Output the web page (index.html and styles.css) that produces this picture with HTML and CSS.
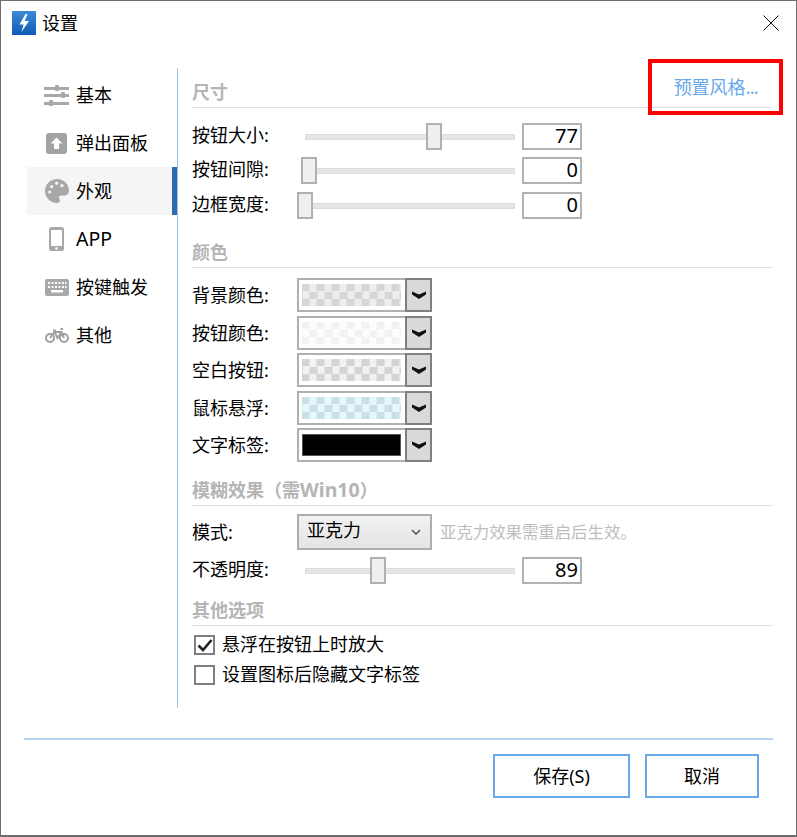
FILE: index.html
```html
<!DOCTYPE html>
<html lang="zh-CN">
<head>
<meta charset="utf-8">
<title>设置</title>
<link rel="stylesheet" href="styles.css">
</head>
<body>
<div class="window">
  <header class="titlebar">
    <svg class="logo" viewBox="0 0 24 24" width="24" height="24">
      <defs><linearGradient id="lg" x1="0" y1="0" x2="0" y2="1"><stop offset="0" stop-color="#3f8ad8"/><stop offset="1" stop-color="#0b5cb8"/></linearGradient></defs>
      <rect width="24" height="24" fill="url(#lg)"/>
      <path d="M13.5 3 7.5 13.5h4L9.5 21l7.5-11h-4.2L15.5 3z" fill="#fff"/>
    </svg>
    <span class="title">设置</span>
    <svg class="close" viewBox="0 0 16 16" width="16" height="16"><path d="M.5.5l15 15M15.5.5l-15 15" stroke="#111" stroke-width="1" fill="none"/></svg>
  </header>

  <div class="main">
    <nav class="sidebar">
      <div class="nav-item">
        <span class="nav-icon"><svg viewBox="0 0 25 21" width="25" height="21" fill="#a8a8a8"><rect y="2" width="25" height="3"/><rect y="9" width="25" height="3"/><rect y="17" width="25" height="3"/><rect x="11" y="0" width="4" height="6" rx="1"/><rect x="17" y="7" width="4" height="6" rx="1"/><rect x="5" y="15" width="4" height="6" rx="1"/></svg></span>
        <span>基本</span>
      </div>
      <div class="nav-item">
        <span class="nav-icon"><svg viewBox="0 0 21 21" width="21" height="21"><rect width="21" height="21" rx="3" fill="#a3a3a3"/><path d="M10.5 4.5 16.5 10.5H13V16H8V10.5H4.5z" fill="#fff"/></svg></span>
        <span>弹出面板</span>
      </div>
      <div class="nav-item active">
        <span class="nav-icon"><svg viewBox="0 0 24 24" width="24" height="24"><path d="M12 0C5.4 0 0 5.4 0 12s5.4 12 12 12c2 0 3-1.2 3-2.7 0-.8-.4-1.3-.7-1.8-.3-.5-.5-1-.2-1.7.5-1 1.6-1.2 3-1.2h2.4C22 16.6 24 15 24 11.5 24 5 18.6 0 12 0z" fill="#a8a8a8"/><circle cx="4.7" cy="13" r="1.6" fill="#f5f5f5"/><circle cx="6.7" cy="7.7" r="1.6" fill="#f5f5f5"/><circle cx="11.7" cy="4.2" r="1.6" fill="#f5f5f5"/><circle cx="17" cy="6.7" r="1.6" fill="#f5f5f5"/></svg></span>
        <span>外观</span>
      </div>
      <div class="nav-item">
        <span class="nav-icon"><svg viewBox="0 0 15 24" width="15" height="24"><rect width="15" height="24" rx="2.5" fill="#a8a8a8"/><rect x="2" y="3" width="11" height="16" fill="#fff"/><circle cx="7.5" cy="21.5" r="1.3" fill="#fff"/></svg></span>
        <span class="latin">APP</span>
      </div>
      <div class="nav-item">
        <span class="nav-icon"><svg viewBox="0 0 24 17" width="24" height="17"><rect width="24" height="17" rx="2" fill="#a8a8a8"/><g fill="#fff"><rect x="3" y="3" width="2" height="2"/><rect x="6.5" y="3" width="2" height="2"/><rect x="10" y="3" width="2" height="2"/><rect x="13.5" y="3" width="2" height="2"/><rect x="17" y="3" width="2" height="2"/><rect x="20" y="3" width="1.5" height="2"/><rect x="3" y="7" width="2" height="2"/><rect x="6.5" y="7" width="2" height="2"/><rect x="10" y="7" width="2" height="2"/><rect x="13.5" y="7" width="2" height="2"/><rect x="17" y="7" width="2" height="2"/><rect x="20" y="7" width="1.5" height="2"/><rect x="6" y="11" width="12" height="2.5"/></g></svg></span>
        <span>按键触发</span>
      </div>
      <div class="nav-item">
        <span class="nav-icon"><svg viewBox="0 0 24 15" width="24" height="15" fill="none" stroke="#a0a0a0" stroke-width="2"><circle cx="5" cy="10" r="4"/><circle cx="19" cy="10" r="4"/><path d="M5 10 9.5 4h7L19 10M9.5 4 12.5 10 16.5 4M15.5 1h2.5M8 2.5h3"/></svg></span>
        <span>其他</span>
      </div>
    </nav>

    <div class="content">
      <div class="heading">
        <span>尺寸</span>
        <a class="preset">预置风格<span class="dots">...</span></a>
      </div>
      <div class="rows rows-size">
        <div class="row slider-row"><span class="label">按钮大小:</span><div class="slider"><i class="track"></i><i class="thumb" style="left:129px"></i></div><div class="num">77</div></div>
        <div class="row slider-row"><span class="label">按钮间隙:</span><div class="slider"><i class="track"></i><i class="thumb" style="left:4px"></i></div><div class="num">0</div></div>
        <div class="row slider-row"><span class="label">边框宽度:</span><div class="slider"><i class="track"></i><i class="thumb" style="left:0"></i></div><div class="num">0</div></div>
      </div>

      <div class="heading heading-color"><span>颜色</span></div>
      <div class="rows rows-color">
        <div class="row color-row"><span class="label">背景颜色:</span><div class="picker"><div class="well"><div class="swatch sw-bg"></div></div><div class="drop"><svg viewBox="0 0 14 8" width="14" height="8"><path d="M0 .5 7 3.5 14 .5V3.5L7 8 0 3.5z" fill="#111"/></svg></div></div></div>
        <div class="row color-row"><span class="label">按钮颜色:</span><div class="picker"><div class="well"><div class="swatch sw-btn"></div></div><div class="drop"><svg viewBox="0 0 14 8" width="14" height="8"><path d="M0 .5 7 3.5 14 .5V3.5L7 8 0 3.5z" fill="#111"/></svg></div></div></div>
        <div class="row color-row"><span class="label">空白按钮:</span><div class="picker"><div class="well"><div class="swatch sw-blank"></div></div><div class="drop"><svg viewBox="0 0 14 8" width="14" height="8"><path d="M0 .5 7 3.5 14 .5V3.5L7 8 0 3.5z" fill="#111"/></svg></div></div></div>
        <div class="row color-row"><span class="label">鼠标悬浮:</span><div class="picker"><div class="well"><div class="swatch sw-hover"></div></div><div class="drop"><svg viewBox="0 0 14 8" width="14" height="8"><path d="M0 .5 7 3.5 14 .5V3.5L7 8 0 3.5z" fill="#111"/></svg></div></div></div>
        <div class="row color-row"><span class="label">文字标签:</span><div class="picker"><div class="well"><div class="swatch sw-text"></div></div><div class="drop"><svg viewBox="0 0 14 8" width="14" height="8"><path d="M0 .5 7 3.5 14 .5V3.5L7 8 0 3.5z" fill="#111"/></svg></div></div></div>
      </div>

      <div class="heading heading-blur"><span>模糊效果（需<span class="win">Win10</span>）</span></div>
      <div class="rows rows-blur">
        <div class="row select-row"><span class="label">模式:</span><div class="select"><span>亚克力</span><svg viewBox="0 0 10 6" width="10" height="6"><path d="M1 1 5 5 9 1" stroke="#555" stroke-width="1.6" fill="none"/></svg></div><span class="hint">亚克力效果需重启后生效。</span></div>
        <div class="row slider-row"><span class="label">不透明度:</span><div class="slider"><i class="track"></i><i class="thumb" style="left:73px"></i></div><div class="num">89</div></div>
      </div>

      <div class="heading heading-other"><span>其他选项</span></div>
      <div class="checks">
        <label class="check"><span class="box"><svg viewBox="0 0 16 14" width="16" height="14"><path d="M1.5 7.5 6 12 14.5 2" stroke="#222" stroke-width="2.6" fill="none"/></svg></span><span class="check-text">悬浮在按钮上时放大</span></label>
        <label class="check"><span class="box"></span><span class="check-text">设置图标后隐藏文字标签</span></label>
      </div>
    </div>
  </div>

  <footer class="footer">
    <button class="btn btn-save">保存(S)</button>
    <button class="btn btn-cancel">取消</button>
  </footer>

  <div class="highlight"></div>
</div>
</body>
</html>
```

FILE: styles.css
```css
* { box-sizing: border-box; }
html, body { margin: 0; padding: 0; background: #fff; overflow: hidden; }
body {
  width: 797px;
  height: 837px;
  font-family: "Noto Sans", "Noto Sans CJK SC", sans-serif;
  font-size: 18px;
  line-height: 26px;
  color: #000;
}
.window {
  position: relative;
  width: 797px;
  height: 837px;
  border: 1px solid #6f6f6f;
  border-bottom-width: 2px;
  background: #fff;
}
.titlebar {
  display: flex;
  align-items: center;
  height: 44px;
  padding: 0 17px 0 11px;
}
.logo { flex: none; }
.title { margin-left: 6px; }
.close { margin-left: auto; }

.main {
  display: flex;
  height: 640px;
  margin-top: 23px;
  padding-left: 26px;
}
.sidebar {
  width: 151px;
  padding-top: 3px;
  border-right: 1px solid #9dbfe0;
}
.nav-item {
  display: flex;
  align-items: center;
  height: 48px;
  padding-left: 17px;
}
.nav-item > span:last-child { padding-bottom: 1px; }
.nav-item.active {
  background: #f5f5f5;
  border-right: 5px solid #2f6cab;
}
.nav-icon {
  display: flex;
  align-items: center;
  justify-content: center;
  width: 25px;
  margin-right: 7px;
}
.nav-item > .latin { padding-bottom: 3px; font-size: 19.5px; }

.content {
  width: 595px;
  padding-left: 14px;
}
.heading {
  display: flex;
  align-items: flex-end;
  justify-content: space-between;
  height: 40px;
  padding: 0 15px 2px 0;
  border-bottom: 1px solid #e1e1e1;
  font-weight: 700;
  color: #b5b5b5;
}
.preset {
  padding-bottom: 5px;
  font-weight: 400;
  color: #68a8ea;
}
.dots { letter-spacing: -.7px; }
.win { font-size: 19.5px; }
.heading-color { margin-top: 9px; }
.heading-blur { margin-top: 4px; }
.heading-other { margin-top: 2px; }

.rows { display: flex; flex-direction: column; }
.rows-size { gap: 7px; margin-top: 15px; }
.rows-size .row:last-child { margin-top: 1px; }
.rows-color { gap: 3.5px; margin-top: 10px; }
.rows-blur { gap: 7px; margin-top: 8px; }

.row {
  display: flex;
  align-items: center;
  height: 27px;
}
.color-row { height: 34px; }
.select-row { height: 36px; }
.label { flex: none; width: 105px; }
.slider-row .label { padding-bottom: 3px; }

.slider {
  position: relative;
  display: flex;
  align-items: center;
  width: 218px;
  height: 27px;
  padding-left: 8px;
}
.track {
  display: block;
  width: 100%;
  height: 6px;
  background: #e4e6e5;
  border: 1px solid #dcdddc;
}
.thumb {
  position: absolute;
  top: 0;
  width: 16px;
  height: 27px;
  background: #efefef;
  border: 2px solid #b0b0b0;
}
.num {
  width: 60px;
  height: 27px;
  margin-left: 7px;
  padding-right: 2px;
  border: 2px solid #b2b2b2;
  font-size: 20px;
  line-height: 22px;
  text-align: right;
}

.picker { display: flex; width: 135px; height: 34px; }
.well {
  display: flex;
  align-items: center;
  width: 108px;
  padding-left: 3px;
  border: 2px solid #b0b0b0;
  border-right: 0;
  background: #fff;
}
.swatch { width: 99px; height: 22px; }
.sw-bg { background: repeating-conic-gradient(#d6d6d6 0 25%, #ededed 0 50%) 7.5px 0 / 15px 15px; }
.sw-btn { background: repeating-conic-gradient(#f2f2f2 0 25%, #fdfdfd 0 50%) 7.5px 0 / 15px 15px; }
.sw-blank { background: repeating-conic-gradient(#d4d4d4 0 25%, #f2f2f2 0 50%) 7.5px 0 / 15px 15px; }
.sw-hover { background: repeating-conic-gradient(#cbe0e6 0 25%, #e6f8fd 0 50%) 7.5px 0 / 15px 15px; }
.sw-text { background: #000; border: 1px solid #555; }
.drop {
  display: flex;
  align-items: center;
  justify-content: center;
  width: 27px;
  background: #d9d9d9;
  border: 2px solid #808080;
}

.select {
  display: flex;
  align-items: center;
  justify-content: space-between;
  width: 135px;
  height: 36px;
  padding: 0 9px 5px 8px;
  border: 2px solid #adadad;
  background: linear-gradient(#f1f1f1, #e4e4e4);
}
.select svg { margin-top: 4px; }
.hint {
  margin-left: 8px;
  font-size: 16.4px;
  color: #bdbdbd;
}

.checks {
  display: flex;
  flex-direction: column;
  gap: 10px;
  margin-top: 9px;
  padding-left: 2px;
}
.check {
  display: flex;
  align-items: center;
  height: 20px;
}
.check-text { padding-bottom: 2px; }
.box {
  display: flex;
  align-items: center;
  justify-content: center;
  width: 21px;
  height: 20px;
  margin-right: 7px;
  border: 2px solid #7f7f7f;
  background: #fff;
}

.footer {
  display: flex;
  gap: 15px;
  height: 60px;
  margin: 30px 23px 0 23px;
  padding: 14px 14px 0 469px;
  border-top: 2px solid #b4d5f6;
}
.btn {
  height: 44px;
  padding: 0;
  border: 2px solid #6aa9e8;
  background: #fff;
  font: inherit;
  color: #000;
}
.btn-save { width: 137px; }
.btn-cancel { width: 114px; }

.highlight {
  position: absolute;
  left: 647px;
  top: 58px;
  width: 135px;
  height: 56px;
  border: 4px solid #f00;
  pointer-events: none;
}
```
